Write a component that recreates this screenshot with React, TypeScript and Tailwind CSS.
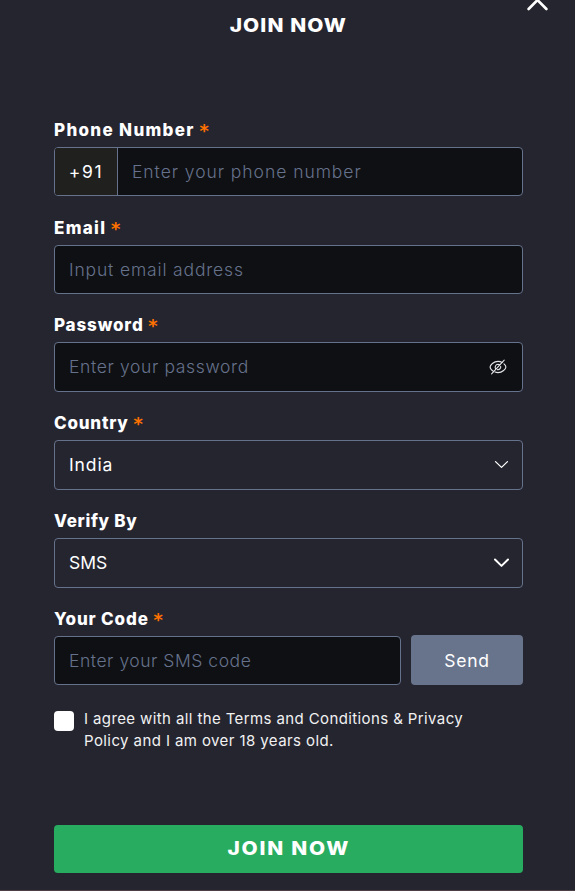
import React from 'react';

const inputBase =
  'min-w-0 flex-1 bg-transparent px-[14px] pt-[2px] text-[17.5px] font-light text-white outline-none placeholder:text-[#66728c] placeholder:opacity-100';

function Field({
  label,
  tracking,
  required = true,
  children,
}: {
  label: string;
  tracking: string;
  required?: boolean;
  children: React.ReactNode;
}) {
  return (
    <div>
      <label className="flex h-[34px] items-center pt-[2px] text-[17px] font-extrabold text-white">
        <span className={`whitespace-nowrap ${tracking}`}>{label}</span>
        {required && (
          <span className="ml-[4px] h-[18px] font-['DejaVu_Sans_Mono'] text-[18px] leading-[18px] font-bold text-[#ff7200]">
            *
          </span>
        )}
      </label>
      {children}
    </div>
  );
}

function Chevron({ bold }: { bold?: boolean }) {
  return (
    <svg width="16" height="10" viewBox="0 0 16 10" fill="none" stroke="#fff" strokeLinecap="round" strokeLinejoin="round">
      {bold ? (
        <path d="M2 1.5 L8.5 7.9 L15 1.5" strokeWidth="2" />
      ) : (
        <path d="M2.5 1.6 L8.5 7.4 L14.5 1.6" strokeWidth="1.3" />
      )}
    </svg>
  );
}

function EyeOff() {
  return (
    <svg width="18" height="18" viewBox="0 0 18 18" fill="none" stroke="#e4e5e8" strokeWidth="1.1" strokeLinecap="round">
      <path d="M4.6 13.4 C2.5 12.2 1.1 10.2 1.1 9 C1.1 7 4.6 3.4 9 3.4 C10.6 3.4 12 3.8 13.2 4.5" />
      <path d="M15 5.9 C16.2 7 16.9 8.2 16.9 9 C16.9 11 13.4 14.6 9 14.6 C7.9 14.6 6.9 14.4 6 14.1" />
      <path d="M6.6 10.8 C5.5 9 6.6 6.4 9 6.3 C9.7 6.3 10.2 6.5 10.7 6.8" />
      <path d="M11.7 8.4 C12 10.2 10.7 11.7 9 11.7 L8.4 11.6" />
      <path d="M2.6 15.8 L15.2 2.2" />
    </svg>
  );
}

export default function App() {
  return (
    <div className="flex h-[891px] w-[575px] flex-col overflow-hidden border-b border-[#4b4046] bg-[#25252f] font-['Inter',sans-serif]">
      <header className="grid h-[113px] grid-cols-[1fr_auto_1fr] items-start">
        <h1 className="col-start-2 ml-[2px] scale-x-[1.1] pt-[11px] text-[19px] leading-[30px] font-extrabold tracking-[1px] whitespace-nowrap text-white">
          JOIN NOW
        </h1>
        <button aria-label="Close" className="mr-[27px] justify-self-end">
          <svg width="21" height="11" viewBox="0 0 21 11" fill="none" stroke="#fff" strokeWidth="2.6" strokeLinecap="round">
            <path d="M1.6 9 L10.5 0 L19.4 9" />
          </svg>
        </button>
      </header>

      <form className="ml-[54px] flex w-[469px] flex-col gap-[14px]">
        <Field label="Phone Number" tracking="tracking-[1.32px]">
          <div className="mb-px flex h-[49px] overflow-hidden rounded-[4px] border border-[#66728c] bg-[#0f1013]">
            <span className="flex w-[63px] items-center justify-center border-r border-[#66728c] bg-[#20201f] pt-[2px] text-[17.5px] tracking-[1.6px] text-white">
              +91
            </span>
            <input className={`${inputBase} tracking-[0.95px]`} placeholder="Enter your phone number" />
          </div>
        </Field>

        <Field label="Email" tracking="tracking-[1.3px]">
          <div className="flex h-[49px] rounded-[4px] border border-[#66728c] bg-[#0f1013]">
            <input className={`${inputBase} tracking-[0.84px]`} placeholder="Input email address" />
          </div>
        </Field>

        <Field label="Password" tracking="tracking-[0.85px]">
          <div className="flex h-[50px] items-center rounded-[4px] border border-[#66728c] bg-[#0f1013] pr-[15px]">
            <input type="password" className={`${inputBase} pb-[2px] tracking-[0.64px]`} placeholder="Enter your password" />
            <EyeOff />
          </div>
        </Field>

        <Field label="Country" tracking="tracking-[0.78px]">
          <div className="flex h-[50px] items-center justify-between rounded-[4px] border border-[#66728c] pr-[13px] pl-[14px] text-[17.5px] tracking-[0.9px] text-white">
            <span>India</span>
            <Chevron />
          </div>
        </Field>

        <Field label="Verify By" tracking="tracking-[0.68px]" required={false}>
          <div className="flex h-[50px] items-center justify-between rounded-[4px] border border-[#66728c] pr-[13px] pl-[14px] text-[17.5px] tracking-[0px] text-white">
            <span>SMS</span>
            <Chevron bold />
          </div>
        </Field>

        <Field label="Your Code" tracking="tracking-[0.85px]">
          <div className="-mt-px flex items-end gap-[10px]">
            <div className="flex h-[49px] w-[347px] rounded-[4px] border border-[#66728c] bg-[#0f1013]">
              <input className={`${inputBase} tracking-[0.54px]`} placeholder="Enter your SMS code" />
            </div>
            <button type="button" className="h-[50px] flex-1 rounded-[4px] bg-[#68748c] pt-[2px] text-[17.5px] tracking-[0.8px] text-white">
              Send
            </button>
          </div>
        </Field>
      </form>

      <div className="mt-[23px] ml-[54px] flex gap-[10px]">
        <span className="mt-[3px] size-5 shrink-0 rounded-[4px] bg-white" />
        <p className="text-[15px] leading-[22px] whitespace-nowrap text-[#f1f1f2]">
          <span className="tracking-[0.39px]">I agree with all the Terms and Conditions &amp; Privacy</span>
          <br />
          <span className="tracking-[0.41px]">Policy and I am over 18 years old.</span>
        </p>
      </div>

      <button className="mt-[73px] ml-[54px] h-[48px] w-[469px] shrink-0 rounded-[4px] bg-[#28ad60] text-[19px] font-extrabold tracking-[1.6px] text-white">
        <span className="inline-block scale-x-[1.1]">JOIN NOW</span>
      </button>
    </div>
  );
}
